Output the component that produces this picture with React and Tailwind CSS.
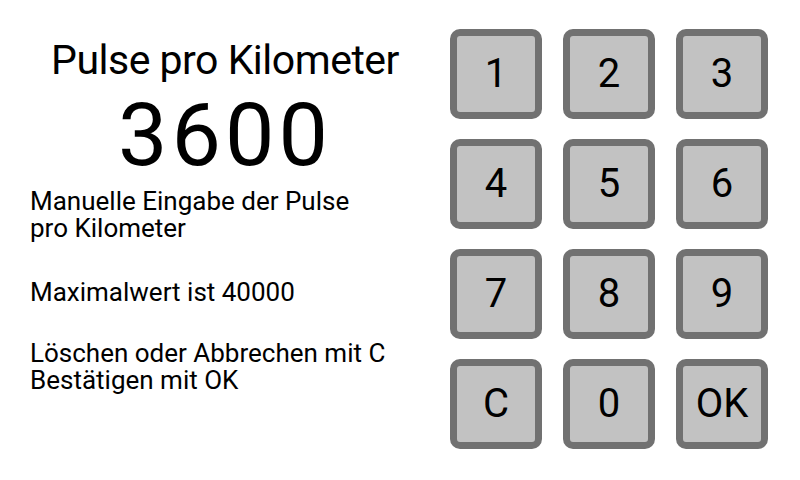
const keys = ["1", "2", "3", "4", "5", "6", "7", "8", "9", "C", "0", "OK"];

function Key({ label }) {
  return (
    <button
      type="button"
      className="flex h-[90px] w-[92px] items-center justify-center rounded-[10px] border-[7px] border-[#717171] bg-[#c2c2c2] text-[40px] leading-none text-black"
    >
      {label}
    </button>
  );
}

export default function App() {
  return (
    <div
      className="flex h-[480px] w-[800px] overflow-hidden bg-white text-black"
      style={{ fontFamily: "Roboto, 'Noto Sans', sans-serif" }}
    >
      <div className="flex w-[450px] flex-col">
        <div className="pt-[35px] text-center text-[41px] leading-[50px] tracking-[-0.5px]">Pulse pro Kilometer</div>
        <div className="mt-[5px] text-center text-[88px] leading-[90px] tracking-[4px]">3600</div>
        <div className="pl-[30px] text-[26px] leading-[27px]">
          <div className="mt-[8px]">
            <div>Manuelle Eingabe der Pulse</div>
            <div>pro Kilometer</div>
          </div>
          <div className="mt-[37px]">Maximalwert ist 40000</div>
          <div className="mt-[34px]">
            <div>Löschen oder Abbrechen mit C</div>
            <div>Bestätigen mit OK</div>
          </div>
        </div>
      </div>
      <div className="mt-[29px] grid h-fit grid-cols-[92px_92px_92px] gap-x-[21px] gap-y-[20px]">
        {keys.map((k) => (
          <Key key={k} label={k} />
        ))}
      </div>
    </div>
  );
}
